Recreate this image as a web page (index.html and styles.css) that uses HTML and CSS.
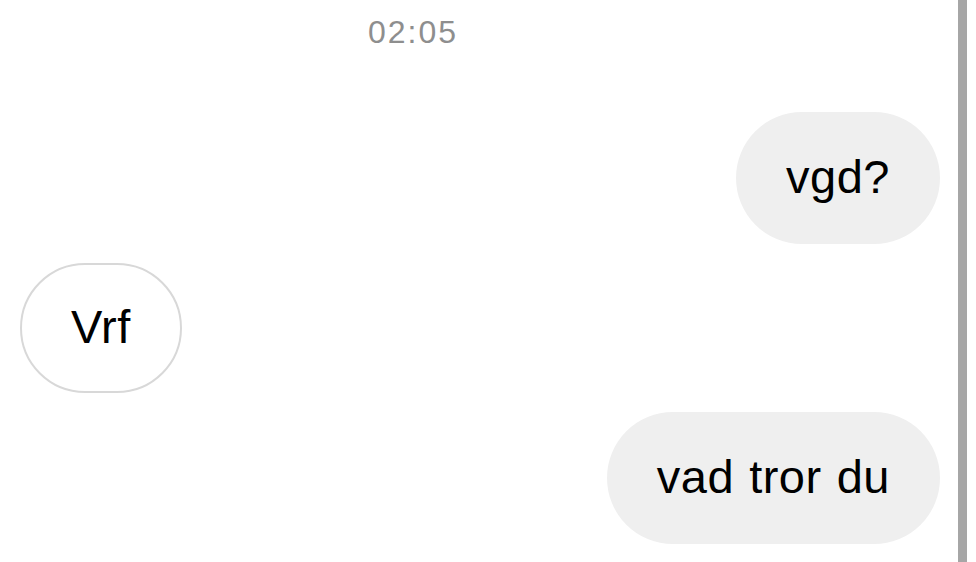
FILE: index.html
```html
<!DOCTYPE html>
<html lang="sv">
<head>
<meta charset="utf-8">
<title>Chat</title>
<link rel="stylesheet" href="styles.css">
</head>
<body>
<div class="page">
  <main class="chat">
    <div class="time">02:05</div>
    <div class="row row-out"><div class="bubble out">vgd?</div></div>
    <div class="row row-in"><div class="bubble in">Vrf</div></div>
    <div class="row row-out"><div class="bubble out">vad tror du</div></div>
  </main>
  <div class="scrollbar"></div>
  <div class="edge"></div>
</div>
</body>
</html>
```
FILE: styles.css
```css
html, body {
  margin: 0;
  padding: 0;
  background: #ffffff;
}
body {
  font-family: "Liberation Sans", Arial, sans-serif;
  width: 976px;
  height: 562px;
  overflow: hidden;
}
.page {
  display: flex;
  height: 562px;
}
.chat {
  flex: 1;
  display: flex;
  flex-direction: column;
  padding: 12px 18px 0 20px;
}
.time {
  font-size: 32px;
  line-height: 40px;
  height: 40px;
  color: #8e8e8e;
  letter-spacing: 2px;
  padding-left: 348px;
  margin-bottom: 60px;
}
.row {
  display: flex;
  margin-bottom: 19px;
}
.row-out { justify-content: flex-end; }
.row-in { justify-content: flex-start; }
.bubble {
  font-size: 47px;
  line-height: 54px;
  color: #000;
  border-radius: 66px;
  white-space: nowrap;
  letter-spacing: 0.5px;
  word-spacing: 1.5px;
}
.bubble.out {
  background: #efefef;
  padding: 38px 50px 40px;
}
.bubble.in {
  background: #ffffff;
  border: 2px solid #d8d8d8;
  padding: 35px 49px 37px;
}
.scrollbar {
  width: 9px;
  background: #a6a6a6;
}
.edge {
  width: 9px;
  background: #ffffff;
}
```
